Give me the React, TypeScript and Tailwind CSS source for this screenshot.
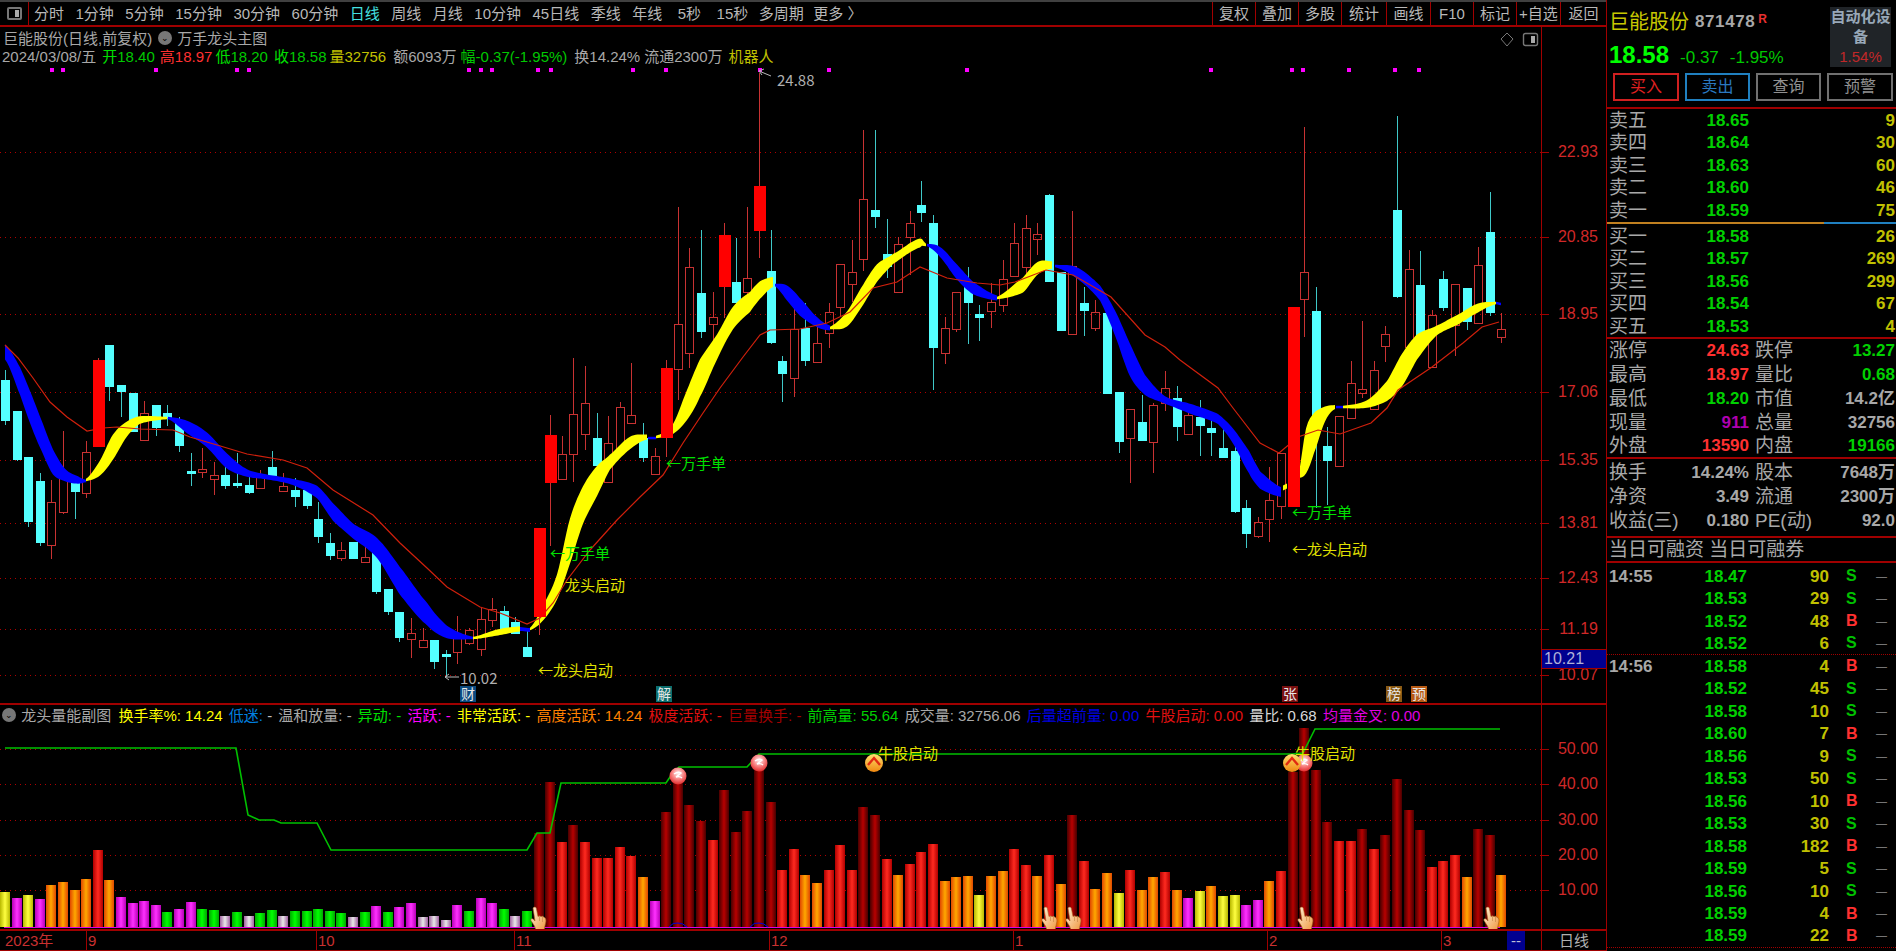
import { useMemo } from "react";

// [kind, wickTop, bodyTop, bodyBottom, wickBottom] in page pixels. 0 cyan, 1 hollow red, 2 solid red
const candles: number[][] = [
  [0,370,380,421,425],[0,411,411,460,461],[0,457,457,522,527],[0,473,481,543,546],[1,480,502,545,559],[1,431,473,512,514],[0,482,482,492,519],[1,441,452,493,498],[2,358,360,447,447],[0,345,345,387,401],
  [0,385,385,392,417],[0,393,393,432,432],[1,401,413,440,440],[0,405,405,428,436],[0,405,413,418,426],[0,417,421,446,452],[0,453,471,474,486],[1,448,469,472,478],[1,462,475,479,495],[0,467,475,486,489],
  [0,453,483,486,488],[0,477,485,493,494],[1,470,477,488,488],[0,451,467,476,477],[1,473,486,491,491],[0,478,490,497,507],[0,490,490,506,509],[0,502,519,537,543],[0,533,543,556,560],[1,542,550,558,561],
  [0,542,542,559,559],[1,545,557,562,562],[0,550,550,592,594],[0,589,589,612,615],[0,612,612,638,642],[1,618,633,639,658],[1,628,640,647,647],[0,640,640,662,669],[0,650,654,657,677],[1,616,637,652,664],
  [1,628,630,643,645],[1,607,619,649,656],[1,598,609,620,627],[0,606,611,630,633],[0,617,622,634,634],[0,630,647,657,657],[2,528,528,617,635],[2,415,435,483,546],[1,436,454,479,479],[1,358,414,454,482],
  [1,366,403,434,450],[0,413,438,466,468],[1,416,443,482,482],[1,402,407,450,450],[1,363,415,423,423],[0,423,438,458,462],[1,448,456,474,474],[2,360,368,438,457],[1,207,324,369,400],[1,248,267,353,368],
  [0,230,293,332,338],[1,292,317,324,347],[2,223,235,287,318],[0,238,282,303,310],[1,207,278,292,300],[2,73,186,231,258],[0,230,271,343,344],[0,356,361,374,402],[1,306,329,378,397],[0,303,328,361,366],
  [1,327,343,362,362],[1,303,312,333,348],[1,264,264,307,317],[1,240,272,284,302],[1,130,199,259,271],[0,130,210,217,228],[0,219,254,267,278],[1,237,244,292,292],[1,211,223,237,275],[0,181,205,213,222],
  [0,215,223,348,390],[1,317,328,353,364],[1,292,292,329,332],[0,267,287,303,344],[0,305,314,318,341],[1,283,302,311,328],[1,260,279,305,312],[1,223,243,276,276],[1,215,228,267,277],[1,223,234,239,255],
  [0,194,195,282,282],[0,272,272,331,331],[1,211,266,334,334],[0,287,303,311,336],[1,300,312,328,331],[0,313,313,394,394],[0,392,392,442,453],[1,409,409,438,483],[0,395,422,441,441],[1,403,405,442,473],
  [1,371,388,403,411],[0,386,398,427,441],[1,408,415,434,434],[0,400,417,426,456],[0,419,428,433,456],[0,427,448,458,458],[0,447,451,512,513],[0,500,508,534,548],[1,517,522,536,538],[1,467,500,519,542],
  [1,453,453,506,519],[2,307,307,507,507],[1,127,272,299,337],[0,287,311,420,508],[0,427,446,461,505],[1,416,416,466,466],[1,361,383,418,418],[1,321,389,393,398],[1,361,370,409,409],[1,326,334,346,362],
  [0,116,210,297,298],[1,250,269,347,347],[0,251,285,340,340],[1,310,315,367,367],[0,271,279,308,311],[1,284,284,325,356],[0,288,288,322,330],[1,247,265,323,323],[0,192,232,313,316],[1,313,329,337,343],
];

// ribbon pieces as [x, centre y, half thickness]
const ribbons: { c: string; p: number[][] }[] = [
  { c: "#0000ff", p: [[5,352,6],[20,381,11],[32,412,13],[43,439,12],[53,462,10],[65,475,5],[78,480,3],[86,481,1]] },
  { c: "#ffff00", p: [[86,480,1],[100,468,6],[113,447,10],[127,429,6],[140,420,3],[167,418,1]] },
  { c: "#0000ff", p: [[168,418,1],[187,427,5],[207,440,6],[227,461,6],[247,473,3],[267,477,2],[293,482,2.5],[317,492,5],[333,512,7],[353,531,6],[377,548,8],[400,581,11],[427,614,9],[447,632,5],[473,638,1]] },
  { c: "#ffff00", p: [[473,638,1],[500,632,2.5],[520,629,2]] },
  { c: "#0000ff", p: [[520,629,1.5],[530,630,1.5]] },
  { c: "#ffff00", p: [[530,629,1],[543,613,6],[557,587,10],[570,541,18],[583,505,15],[597,481,12],[610,462,6],[630,443,5],[647,437,2]] },
  { c: "#0000ff", p: [[648,438,1],[656,438,1]] },
  { c: "#ffff00", p: [[656,437,1],[673,429,4],[687,405,12],[700,378,15],[717,347,10],[733,318,9],[750,302,8],[760,290,7],[773,282,4]] },
  { c: "#0000ff", p: [[775,285,1],[787,293,6],[800,307,7],[817,322,4],[830,328,2]] },
  { c: "#ffff00", p: [[830,328,1],[847,319,6],[863,295,8],[877,273,7],[893,259,4],[920,243,3.5],[926,245,1]] },
  { c: "#0000ff", p: [[927,245,1],[940,252,4],[957,272,6],[973,288,5],[997,298,2]] },
  { c: "#ffff00", p: [[997,298,1],[1023,285,6],[1038,268,5],[1052,265,3]] },
  { c: "#0000ff", p: [[1055,266,1],[1077,273,4.5],[1100,293,6],[1115,323,10],[1130,360,13],[1145,385,8],[1165,400,3],[1191,409,4],[1218,419,4],[1233,436,6],[1249,462,9],[1260,480,7],[1281,492,4]] },
  { c: "#ffff00", p: [[1283,488,2],[1287,486,2]] },
  { c: "#ffff00", p: [[1298,477,1],[1306,451,18],[1314,433,16],[1325,414,6],[1335,407,1.5]] },
  { c: "#0000ff", p: [[1336,407,1],[1343,407,1]] },
  { c: "#ffff00", p: [[1343,407,1],[1367,404,3],[1387,391,8],[1402,370,13],[1417,347,10],[1436,331,4],[1459,319,4],[1478,308,3.5],[1496,303,1]] },
  { c: "#0000ff", p: [[1496,303,1],[1501,304,1]] },
];

const maLine = "5,345 18,358 33,378 50,402 67,417 87,431 103,428 117,427 140,429 173,430 190,437 217,445 247,454 283,460 307,468 333,490 373,515 400,543 427,568 447,587 480,607 500,613 510,617 527,624 540,618 553,603 567,580 590,550 617,520 640,497 663,475 683,443 703,413 720,388 743,357 760,335 770,330 800,329 827,323 850,312 873,288 897,282 920,267 947,278 977,283 1000,285 1015,282 1046,270 1073,275 1111,297 1145,335 1165,347 1180,360 1218,388 1233,408 1260,443 1279,453 1298,437 1318,430 1340,434 1371,423 1387,408 1398,390 1432,367 1463,343 1482,327 1499,322";
const highVolLine = "5,748 236,748 248,815 259,820 274,820 281,823 317,823 331,850 527,850 537,833 550,833 561,783 666,783 670,777 679,767 747,767 759,754 1292,754 1303,753 1315,729 1500,729";

const mainGrid = [152, 237, 314, 392, 460, 523, 578, 629, 675];
const subGrid = [749, 784, 820, 855, 890];
const mainAxis: [string, number][] = [["22.93",152],["20.85",237],["18.95",314],["17.06",392],["15.35",460],["13.81",523],["12.43",578],["11.19",629],["10.07",675]];
const subAxis: [string, number][] = [["50.00",749],["40.00",784],["30.00",820],["20.00",855],["10.00",890]];

const dots = [50,61,154,235,247,467,479,490,536,549,631,664,758,827,965,1209,1290,1301,1347,1393,1417];

const volTop = [607,625,614,628,585,577,600,566,480,570,622,640,633,644,667,656,637,656,659,678,667,678,670,659,678,663,663,656,663,670,682,667,648,667,652,640,682,678,689,644,663,625,640,656,678,663,430,277,457,405,457,505,505,472,497,562,633,367,280,345,393,450,300,427,363,240,337,540,476,
  555,580,540,465,540,352,375,506,555,521,487,461,573,562,558,614,558,543,476,525,558,495,581,375,513,596,550,610,540,600,562,547,600,625,603,588,618,614,644,630,573,543,245,115,240,397,453,453,416,476,435,266,360,420,532,513,495,562,416,435,555];
const volKind = [
  "ymymooooro", "mmmm", "gmmgg", "wgwggwgggggwgmgmmwwwmgmmgwg",
  "ddrdrrrrrom", "dddd", "r", "ddddd", "rr",
  "oorrrddrorrrooo", "yoorrorodroo", "yroorom", "yoyymmor", "ddddrrdrddddrrrod", "do",
].join("");

const barFill: Record<string, string> = { y: "url(#by)", m: "url(#bm)", o: "url(#bo)", r: "url(#br)", d: "url(#bd)", g: "url(#bg)", w: "url(#bw)" };

const asks = [["卖五","18.65","9"],["卖四","18.64","30"],["卖三","18.63","60"],["卖二","18.60","46"],["卖一","18.59","75"]];
const bids = [["买一","18.58","26"],["买二","18.57","269"],["买三","18.56","299"],["买四","18.54","67"],["买五","18.53","4"]];

const ticks: [string, string, string, string, boolean][] = [
  ["14:55","18.47","90","S",false],["","18.53","29","S",false],["","18.52","48","B",false],["","18.52","6","S",true],
  ["14:56","18.58","4","B",false],["","18.52","45","S",false],["","18.58","10","S",false],["","18.60","7","B",false],["","18.56","9","S",false],["","18.53","50","S",false],["","18.56","10","B",false],["","18.53","30","S",false],["","18.58","182","B",false],["","18.59","5","S",false],["","18.56","10","S",false],["","18.59","4","B",false],["","18.59","22","B",true],
];

const tabs = ["分时","1分钟","5分钟","15分钟","30分钟","60分钟","日线","周线","月线","10分钟","45日线","季线","年线"];
const tools = ["复权","叠加","多股","统计","画线","F10","标记","+自选","返回"];

// smooth a ribbon into a filled outline
function ribbonPath(p: number[][]) {
  const top: string[] = [];
  const bot: string[] = [];
  for (let i = 0; i < p.length - 1; i++) {
    const a = p[Math.max(i - 1, 0)], b = p[i], c = p[i + 1], d = p[Math.min(i + 2, p.length - 1)];
    const n = Math.max(2, Math.ceil((c[0] - b[0]) / 2));
    for (let k = 0; k <= n; k++) {
      const t = k / n;
      const cr = (j: number) =>
        0.5 * (2 * b[j] + (c[j] - a[j]) * t + (2 * a[j] - 5 * b[j] + 4 * c[j] - d[j]) * t * t + (3 * b[j] - a[j] - 3 * c[j] + d[j]) * t * t * t);
      const x = b[0] + (c[0] - b[0]) * t;
      const y = cr(1);
      const h = Math.max(cr(2) * 1.25, 0.8);
      top.push(`${x.toFixed(1)},${(y - h).toFixed(1)}`);
      bot.unshift(`${x.toFixed(1)},${(y + h).toFixed(1)}`);
    }
  }
  return top.concat(bot).join(" ");
}

function Hand({ x, y }: { x: number; y: number }) {
  return (
    <g transform={`translate(${x - 8} ${y - 12})`}>
      <path d="M3 1C4-.3 6-.2 6.4 1.6L8 9.5 9.5 8.8 11 9.6 12.6 9.2 14 10.2C15.8 10.8 16.4 13 15.6 16L14.2 22.5 6 23 4.5 19 1 13.6C.4 12 2.2 11 3.6 12.4L5 14Z" fill="url(#hand)" stroke="#a8621c" strokeWidth="0.6" />
      <path d="M9.5 9v5M12.5 9.5V15" stroke="#c08040" strokeWidth="0.6" />
    </g>
  );
}

function Ball({ x, y }: { x: number; y: number }) {
  return (
    <g>
      <circle cx={x} cy={y} r="8.5" fill="url(#ball)" />
      <path d={`M${x - 4} ${y - 2}q4-3 7-1l-5 4q4-1 6 1`} fill="none" stroke="#fff" strokeWidth="1.4" />
    </g>
  );
}

function UpMark({ x, y }: { x: number; y: number }) {
  return (
    <g>
      <circle cx={x} cy={y} r="9" fill="url(#up)" />
      <path d={`M${x - 6} ${y + 2}L${x} ${y - 5}L${x + 6} ${y + 2}`} fill="none" stroke="#e02a10" strokeWidth="2.4" />
    </g>
  );
}

function MainSvg() {
  const outlines = useMemo(() => ribbons.map((r) => ({ c: r.c, d: ribbonPath(r.p) })), []);
  const draw = (kinds: number[]) =>
    candles.map((k, i) => {
      if (!kinds.includes(k[0])) return null;
      const x = Math.round(5 + 11.6 * i);
      const [kind, wt, top, bot, wb] = k;
      if (kind === 0)
        return (
          <g key={i}>
            <line x1={x + 0.5} x2={x + 0.5} y1={wt} y2={wb} stroke="#3fc8c8" />
            <rect x={x - 4} y={top} width="9" height={bot - top} fill="#54ffff" />
          </g>
        );
      if (kind === 1)
        return (
          <g key={i} stroke="#c83232" fill="none">
            <line x1={x + 0.5} x2={x + 0.5} y1={wt} y2={top} />
            <line x1={x + 0.5} x2={x + 0.5} y1={bot} y2={wb} />
            <rect x={x - 3.5} y={top + 0.5} width="8" height={bot - top} />
          </g>
        );
      return (
        <g key={i}>
          <line x1={x + 0.5} x2={x + 0.5} y1={wt} y2={wb} stroke="#c83232" />
          <rect x={x - 5} y={top} width="12" height={bot - top} fill="#ff0000" />
        </g>
      );
    });
  return (
    <svg className="absolute inset-0 h-full w-full" viewBox="0 27 1541 676" shapeRendering="crispEdges">
      {mainGrid.map((y) => (
        <line key={y} x1="0" x2="1541" y1={y + 0.5} y2={y + 0.5} stroke="#b00000" strokeDasharray="1 4" />
      ))}
      {dots.map((x) => (
        <rect key={x} x={x} y="68" width="4" height="4" fill="#ff00ff" />
      ))}
      {draw([0, 1])}
      <g shapeRendering="auto">
        {outlines.map((o, i) => (
          <polygon key={i} points={o.d} fill={o.c} />
        ))}
        <polyline points={maLine} fill="none" stroke="#d0200c" strokeWidth="1.2" />
      </g>
      {draw([2])}
      <g stroke="#b8b8b8" fill="none" shapeRendering="auto">
        <path d="M759 71l12 5M759 71l5-2M759 71l3 4" />
        <path d="M445 677h14M445 677l4-3M445 677l4 3" />
      </g>
      <g fill="none" stroke="#777" shapeRendering="auto">
        <path d="M1507 33l6 6-6 7-6-7z" />
        <rect x="1523.5" y="33.5" width="14" height="12" rx="2" strokeWidth="1.4" />
        <rect x="1531" y="36" width="4" height="7" fill="#aaa" stroke="none" />
      </g>
    </svg>
  );
}

function SubSvg() {
  return (
    <svg className="absolute inset-0 h-full w-full" viewBox="0 705 1541 224" shapeRendering="crispEdges">
      <defs>
        {[
          ["by", "#b8b800", "#ffff40"],
          ["bm", "#b800b8", "#ff30ff"],
          ["bo", "#e04800", "#ffa800"],
          ["br", "#b00000", "#ff2a20"],
          ["bd", "#480000", "#b80000"],
          ["bg", "#00a800", "#00ff00"],
          ["bw", "#a060a0", "#e8e8e8"],
        ].map(([id, a, b]) => (
          <linearGradient key={id} id={id}>
            <stop offset="0" stopColor={a} />
            <stop offset="0.5" stopColor={b} />
            <stop offset="1" stopColor={a} />
          </linearGradient>
        ))}
        <radialGradient id="ball" cx="0.5" cy="0.35" r="0.7">
          <stop offset="0" stopColor="#fff0f0" />
          <stop offset="0.5" stopColor="#f88080" />
          <stop offset="1" stopColor="#e02020" />
        </radialGradient>
        <linearGradient id="up" x2="0" y2="1">
          <stop offset="0" stopColor="#ffe070" />
          <stop offset="1" stopColor="#f08810" />
        </linearGradient>
        <linearGradient id="hand" x2="1" y2="1">
          <stop offset="0" stopColor="#fff0d8" />
          <stop offset="1" stopColor="#f09840" />
        </linearGradient>
      </defs>
      {subGrid.map((y) => (
        <line key={y} x1="0" x2="1541" y1={y + 0.5} y2={y + 0.5} stroke="#b00000" strokeDasharray="1 4" />
      ))}
      {volTop.map((t, i) => {
        const y = Math.round(690 + t / 3);
        return <rect key={i} x={Math.round(5 + 11.6 * i) - 5} y={y} width="10" height={927 - y} fill={barFill[volKind[i]] ?? barFill.o} />;
      })}
      <line x1="4" x2="1500" y1="927.5" y2="927.5" stroke="#e000e0" />
      <g shapeRendering="auto">
        <polyline points={highVolLine} fill="none" stroke="#00c000" strokeWidth="1.6" />
        {[678, 759].map((x) => (
          <path key={x} d={`M${x - 9} 927q4-5 9-4q5 0 9 4`} fill="none" stroke="#0000e0" />
        ))}
        <Ball x={678} y={776} />
        <Ball x={759} y={763} />
        <Ball x={1304} y={763} />
        <UpMark x={874} y={763} />
        <UpMark x={1292} y={763} />
        <Hand x={538} y={919} />
        <Hand x={1049} y={919} />
        <Hand x={1073} y={919} />
        <Hand x={1305} y={919} />
        <Hand x={1491} y={919} />
      </g>
    </svg>
  );
}

function Badge({ x, t, c }: { x: string; t: string; c: string }) {
  return <span className={`absolute top-[659px] flex h-[16px] w-[16px] items-center justify-center text-[14px] leading-none text-[#e8e8e8] ${x} ${c}`}>{t}</span>;
}

function Toolbar() {
  return (
    <div className="flex h-[27px] flex-none items-center border-y-2 border-t-[#404040] border-b-[#a00000] text-[15px] leading-none text-[#b8b8b8]">
      <div className="flex h-full w-[29px] flex-none items-center justify-center border-r border-[#a00000]">
        <div className="flex h-[13px] w-[15px] justify-end rounded-[2px] border-2 border-[#777] pr-[1px] pt-[1px]">
          <div className="h-[7px] w-[4px] bg-[#aaa]" />
        </div>
      </div>
      <div className="ml-[5px] flex gap-[11.5px]">
        {tabs.map((t) => (
          <span key={t} className={t === "日线" ? "text-[#45e0e0]" : ""}>{t}</span>
        ))}
        <span className="ml-[4px]">5秒</span>
        <span className="ml-[4px]">15秒</span>
        <span className="-ml-[1px]">多周期</span>
        <span className="-ml-[2px]">更多 〉</span>
      </div>
      <div className="ml-auto flex h-full">
        {tools.map((t, i) => (
          <span key={t} className={`flex h-full items-center justify-center border-l border-[#a00000] ${i === 8 ? "w-[46px]" : i === 4 || i === 7 ? "w-[44px]" : i === 3 ? "w-[45px]" : "w-[43px]"}`}>{t}</span>
        ))}
      </div>
    </div>
  );
}

function Note({ x, y, c, t }: { x: string; y: string; c: string; t: string }) {
  return <span className={`absolute whitespace-nowrap font-['Noto_Sans_CJK_SC','Liberation_Sans',sans-serif] text-[15px] leading-none ${x} ${y} ${c}`}>{t}</span>;
}

function MainChart() {
  return (
    <div className="flex h-[678px] flex-none border-b-2 border-[#a00000]">
      <div className="relative w-[1541px] flex-none">
        <MainSvg />
        <div className="relative flex h-[18px] items-center whitespace-nowrap pl-[3px] pt-[4px] text-[15px] leading-none text-[#a8a8a8]">
          <span>巨能股份(日线,前复权)</span>
          <span className="ml-[6px] flex h-[14px] w-[14px] items-center justify-center rounded-full bg-[#777] text-[9px] text-black">⌄</span>
          <span className="ml-[5px]">万手龙头主图</span>
        </div>
        <div className="relative mt-[2px] flex h-[18px] items-center whitespace-nowrap pl-[2px] text-[15px] leading-none text-[#a8a8a8]">
          <span>2024/03/08/五</span>
          <span className="ml-[6px] text-[#00e000]">开<span className="text-[#00c800]">18.40</span></span>
          <span className="ml-[5px] text-[#ff3030]">高<span>18.97</span></span>
          <span className="ml-[3px] text-[#00e000]">低<span className="text-[#00c800]">18.20</span></span>
          <span className="ml-[6px] text-[#00e000]">收<span className="text-[#00c800]">18.58</span></span>
          <span className="ml-[3px] text-[#c0c000]">量32756</span>
          <span className="ml-[7px]">额6093万</span>
          <span className="ml-[4px] text-[#00c800]">幅-0.37(-1.95%)</span>
          <span className="ml-[7px]">换14.24%</span>
          <span className="ml-[4px]">流通2300万</span>
          <span className="ml-[6px] text-[#c0c000]">机器人</span>
        </div>
        <Note x="left-[777px]" y="top-[45px]" c="text-[#b0b0b0]" t="24.88" />
        <Note x="left-[460px]" y="top-[643px]" c="text-[#b0b0b0]" t="10.02" />
        <Note x="left-[550px]" y="top-[518px]" c="text-[#00e000]" t="←万手单" />
        <Note x="left-[666px]" y="top-[428px]" c="text-[#00e000]" t="←万手单" />
        <Note x="left-[1292px]" y="top-[477px]" c="text-[#00e000]" t="←万手单" />
        <Note x="left-[565px]" y="top-[550px]" c="text-[#e0e000]" t="龙头启动" />
        <Note x="left-[538px]" y="top-[635px]" c="text-[#e0e000]" t="←龙头启动" />
        <Note x="left-[1292px]" y="top-[514px]" c="text-[#e0e000]" t="←龙头启动" />
        <Badge x="left-[460px]" t="财" c="bg-[#0a4a80]" />
        <Badge x="left-[656px]" t="解" c="bg-[#0c6e6e]" />
        <Badge x="left-[1282px]" t="张" c="bg-[#7a1010]" />
        <Badge x="left-[1386px]" t="榜" c="bg-[#8a5a14]" />
        <Badge x="left-[1411px]" t="预" c="bg-[#b85a14]" />
      </div>
      <div className="relative flex-1 border-l border-[#a00000] text-[16px] leading-none text-[#d02828]">
        {mainAxis.map(([t, y]) => (
          <div key={t}>
            <span className="absolute right-[8px]" style={{ top: y - 35 }}>{t}</span>
            <span className="absolute left-0 h-px w-[7px] bg-[#a00000]" style={{ top: y - 27 }} />
          </div>
        ))}
        <div className="absolute left-0 right-0 top-[622px] flex h-[20px] items-center border-y border-[#a00000] bg-[#000090] pl-[2px] text-[#b0b0d8]">10.21</div>
      </div>
    </div>
  );
}

function SubChart() {
  return (
    <div className="flex h-[226px] flex-none border-b-2 border-[#a00000]">
      <div className="relative w-[1541px] flex-none">
        <SubSvg />
        <div className="relative flex h-[20px] items-center gap-[6.2px] whitespace-nowrap pl-[2px] text-[15px] leading-none">
          <span className="flex h-[14px] w-[14px] items-center justify-center rounded-full bg-[#777] text-[9px] text-black">⌄</span>
          <span className="-ml-[1px] text-[#a8a8a8]">龙头量能副图</span>
          <span className="ml-[1px] text-[#ffff00]">换手率%: 14.24</span>
          <span className="text-[#0080e0]">低迷: <span className="text-[#c0c0c0]">-</span></span>
          <span className="text-[#a8a8a8]">温和放量: -</span>
          <span className="text-[#00e000]">异动: -</span>
          <span className="text-[#ff00ff]">活跃: -</span>
          <span className="text-[#ffff00]">非常活跃: -</span>
          <span className="text-[#ff8000]">高度活跃: 14.24</span>
          <span className="text-[#e01010]">极度活跃: -</span>
          <span className="text-[#a00000]">巨量换手: -</span>
          <span className="text-[#00d000]">前高量: 55.64</span>
          <span className="text-[#a8a8a8]">成交量: 32756.06</span>
          <span className="text-[#0000e0]">后量超前量: 0.00</span>
          <span className="text-[#e01010]">牛股启动: 0.00</span>
          <span className="text-[#d8d8d8]">量比: 0.68</span>
          <span className="text-[#e000e0]">均量金叉: 0.00</span>
        </div>
        <Note x="left-[878px]" y="top-[40px]" c="text-[#e0e000]" t="牛股启动" />
        <Note x="left-[1295px]" y="top-[40px]" c="text-[#e0e000]" t="牛股启动" />
      </div>
      <div className="relative flex-1 border-l border-[#a00000] text-[16px] leading-none text-[#d02828]">
        {subAxis.map(([t, y]) => (
          <div key={t}>
            <span className="absolute right-[8px]" style={{ top: y - 713 }}>{t}</span>
            <span className="absolute left-0 h-px w-[7px] bg-[#a00000]" style={{ top: y - 705 }} />
          </div>
        ))}
      </div>
    </div>
  );
}

function DateStrip() {
  const cells: [string, string][] = [["2023年","w-[86px] pl-[5px]"],["9","w-[230px]"],["10","w-[198px]"],["11","w-[255px]"],["12","w-[244px]"],["1","w-[254px]"],["2","w-[174px]"],["3","w-[66px]"]];
  return (
    <div className="flex h-[20px] flex-none border-b border-[#a00000] text-[15px] leading-none text-[#c83030]">
      {cells.map(([t, w], i) => (
        <span key={t} className={`flex h-full flex-none items-center ${w} ${i ? "border-l border-[#a00000] pl-px" : ""}`}>{t}</span>
      ))}
      <span className="flex h-full w-[18px] flex-none items-center justify-center bg-[#000090] text-[#c0c0d8]">--</span>
      <span className="h-full w-[16px] flex-none" />
      <span className="flex h-full flex-1 items-center justify-center border-l border-[#a00000] text-[#b0b0b0]">日线</span>
    </div>
  );
}

function Quote() {
  return (
    <div className="h-[109px] flex-none border-b-2 border-[#a00000]">
      <div className="flex h-[73px]">
        <div className="flex-1 pl-[2px]">
          <div className="flex h-[43px] items-center">
            <span className="text-[20px] leading-none text-[#c8c800]">巨能股份</span>
            <span className="ml-[6px] text-[17px] font-bold leading-none tracking-[0.6px] text-[#a8a8a8]">871478</span>
            <span className="mb-[6px] ml-[3px] text-[12px] font-bold leading-none text-[#e83030]">R</span>
          </div>
          <div className="flex items-baseline">
            <span className="text-[24px] font-bold leading-none text-[#00ff00]">18.58</span>
            <span className="ml-[11px] text-[17px] leading-none text-[#00c800]">-0.37</span>
            <span className="ml-[11px] text-[17px] leading-none text-[#00c800]">-1.95%</span>
          </div>
        </div>
        <div className="mr-[5px] mt-[7px] flex h-[60px] w-[61px] flex-none flex-col items-center justify-center bg-[#202428] text-center text-[15px] font-bold leading-[20px] text-[#98a8b8]">
          <span>自动化设</span>
          <span>备</span>
          <span className="font-normal text-[#c02828]">1.54%</span>
        </div>
      </div>
      <div className="flex h-[28px] gap-[6px] pl-[6px] text-[16px] leading-none">
        <span className="flex w-[66px] items-center justify-center border-2 border-[#d02020] text-[#e02020]">买入</span>
        <span className="flex w-[65px] items-center justify-center border-2 border-[#2080c0] text-[#2a78c0]">卖出</span>
        <span className="flex w-[65px] items-center justify-center border-2 border-[#707070] text-[#909090]">查询</span>
        <span className="flex w-[66px] items-center justify-center border-2 border-[#707070] text-[#909090]">预警</span>
      </div>
    </div>
  );
}

function BookRow({ r }: { r: string[] }) {
  return (
    <div className="flex h-[22.5px] items-center leading-none">
      <span className="ml-[2px] w-[40px] text-[19px] text-[#a8a8a8]">{r[0]}</span>
      <span className="w-[100px] text-right text-[17px] font-bold text-[#00d000]">{r[1]}</span>
      <span className="flex-1 pr-px text-right text-[17px] font-bold text-[#c0c000]">{r[2]}</span>
    </div>
  );
}

function Stat({ a, b, ac, c, d, dc }: { a: string; b: string; ac: string; c: string; d: string; dc: string }) {
  return (
    <div className="flex h-[23.75px] items-center whitespace-nowrap leading-none">
      <span className="ml-[2px] w-[40px] text-[19px] text-[#a8a8a8]">{a}</span>
      <span className={`w-[100px] text-right text-[17px] font-bold ${ac}`}>{b}</span>
      <span className="ml-[6px] w-[40px] text-[19px] text-[#a8a8a8]">{c}</span>
      <span className={`w-[100px] text-right text-[17px] font-bold ${dc}`}>{d}</span>
    </div>
  );
}

function RightPanel() {
  const red = "text-[#ff3030]";
  const green = "text-[#00d000]";
  const grey = "text-[#a8a8a8]";
  return (
    <div className="flex h-full w-[290px] flex-none flex-col overflow-hidden border-l border-[#a00000]">
      <Quote />
      <div className="h-[115px] flex-none">
        {asks.map((r) => <BookRow key={r[0]} r={r} />)}
        <div className="mt-[0.5px] flex h-[2px]">
          <div className="w-[217px] bg-[#c08020]" />
          <div className="flex-1 bg-[#2080c0]" />
        </div>
      </div>
      <div className="h-[115px] flex-none border-b-2 border-[#a00000] pt-[1px]">
        {bids.map((r) => <BookRow key={r[0]} r={r} />)}
      </div>
      <div className="h-[120px] flex-none border-b-2 border-[#a00000]">
        <Stat a="涨停" b="24.63" ac={red} c="跌停" d="13.27" dc={green} />
        <Stat a="最高" b="18.97" ac={red} c="量比" d="0.68" dc={green} />
        <Stat a="最低" b="18.20" ac={green} c="市值" d="14.2亿" dc={grey} />
        <Stat a="现量" b="911" ac="text-[#b000b0]" c="总量" d="32756" dc={grey} />
        <Stat a="外盘" b="13590" ac={red} c="内盘" d="19166" dc={green} />
      </div>
      <div className="h-[79px] flex-none border-b-2 border-[#a00000] pt-[2px]">
        <Stat a="换手" b="14.24%" ac={grey} c="股本" d="7648万" dc={grey} />
        <Stat a="净资" b="3.49" ac={grey} c="流通" d="2300万" dc={grey} />
        <Stat a="收益(三)" b="0.180" ac={grey} c="PE(动)" d="92.0" dc={grey} />
      </div>
      <div className="flex h-[25px] flex-none items-center border-b-2 border-[#a00000] pl-[2px] text-[19px] leading-none text-[#a8a8a8]">当日可融资 当日可融券</div>
      <div className="pt-[2px]">
        {ticks.map(([t, p, q, s, end], i) => (
          <div key={i} className={`flex h-[22.5px] items-center leading-none ${end ? "border-b border-dotted border-[#a00000]" : ""}`}>
            <span className="ml-[2px] w-[44px] text-[17px] font-bold text-[#a8a8a8]">{t}</span>
            <span className="w-[94px] text-right text-[17px] font-bold text-[#00d000]">{p}</span>
            <span className="w-[82px] text-right text-[17px] font-bold text-[#c0c000]">{q}</span>
            <span className={`ml-[17px] w-[11px] text-[16px] font-bold ${s === "S" ? "text-[#00c000]" : "text-[#ff3030]"}`}>{s}</span>
            <span className="ml-[19px] text-[11px] text-[#909090]">—</span>
          </div>
        ))}
      </div>
    </div>
  );
}

export default function App() {
  return (
    <div className="flex h-[951px] w-[1896px] overflow-hidden bg-black font-['Liberation_Sans','Noto_Sans_CJK_SC',sans-serif]">
      <div className="flex w-[1606px] flex-none flex-col">
        <Toolbar />
        <MainChart />
        <SubChart />
        <DateStrip />
      </div>
      <RightPanel />
    </div>
  );
}
